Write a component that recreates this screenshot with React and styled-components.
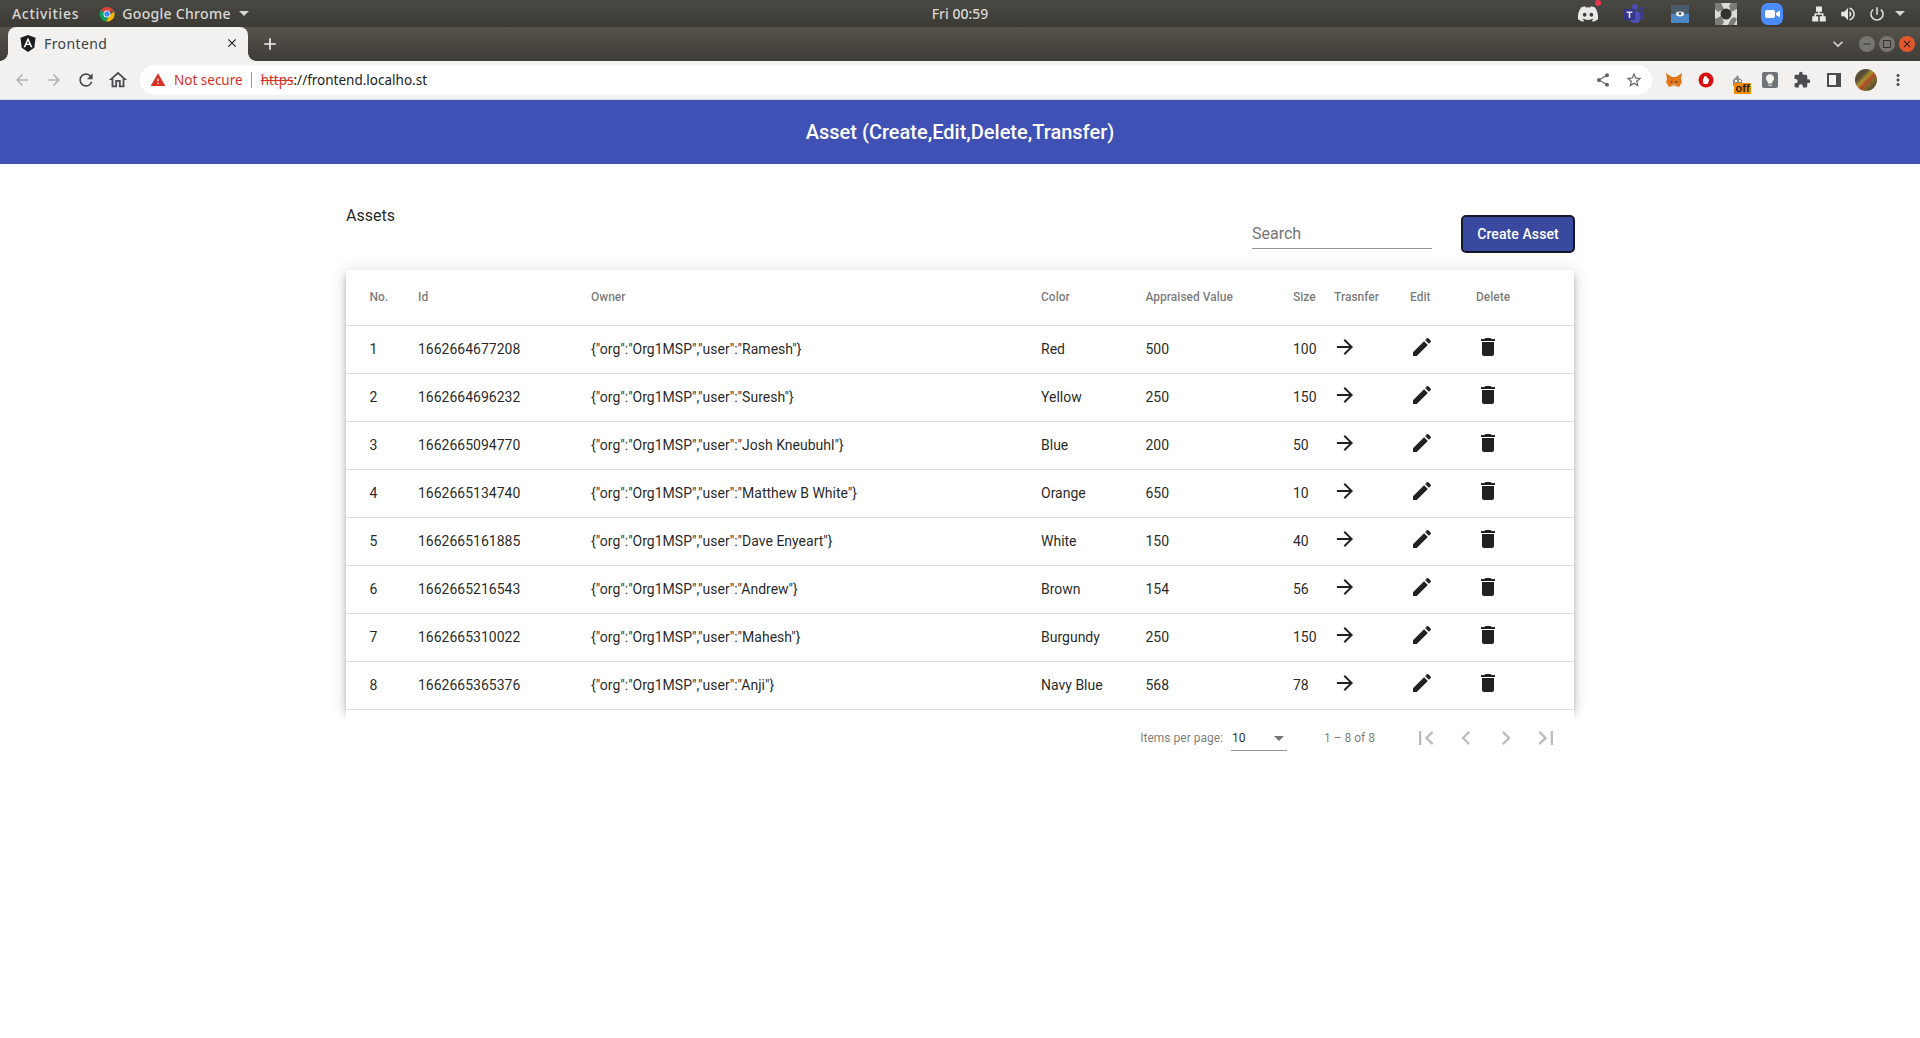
import React from "react";
import styled, { createGlobalStyle } from "styled-components";
import { MdArrowForward, MdEdit, MdDelete, MdFirstPage, MdChevronLeft, MdChevronRight, MdLastPage, MdArrowBack, MdRefresh, MdClose, MdAdd, MdStarBorder, MdMoreVert, MdExtension, MdKeyboardArrowDown, MdOutlineHome, MdWarning, MdShare, MdCropSquare, MdRemove, MdLightbulb, MdVolumeUp, MdPowerSettingsNew, MdLan } from "react-icons/md";
import { FaDiscord } from "react-icons/fa";

const Global = createGlobalStyle`
  html, body { margin: 0; padding: 0; background: #fff; }
  body { font-family: Roboto, "Liberation Sans", sans-serif; height: 1038px; overflow: hidden; }
`;
const SystemBar = styled.div`
  height: 27px; background: linear-gradient(#4a4842, #3c3a35); display: grid; grid-template-columns: 1fr auto 1fr; align-items: center;
  color: #d9d8d4; font: 500 14px "Noto Sans", sans-serif; padding: 0 12px; box-sizing: border-box;
`;
const SysLeft = styled.div`display: flex; align-items: center; gap: 20px; letter-spacing: .3px;`;
const Activities = styled.span`letter-spacing: .7px;`;
const SysApp = styled.div`display: flex; align-items: center; gap: 7px;`;
const Caret = styled.span`width: 0; height: 0; border-left: 5px solid transparent; border-right: 5px solid transparent; border-top: 5px solid #d9d8d4; margin-left: 1px;`;
const SysClock = styled.div`font-size: 14px;`;
const SysRight = styled.div`display: flex; align-items: center; justify-content: flex-end; color: #e8e8e6;`;
const SysSlot = styled.span`display: flex; align-items: center; justify-content: center; width: ${p => p.$w}px; margin-left: ${p => p.$ml || 0}px; position: relative;`;
const RedDot = styled.span`position: absolute; top: -3px; right: 10px; width: 6px; height: 6px; border-radius: 50%; background: #e8384f;`;
const TabStrip = styled.div`height: 34px; background: linear-gradient(#55524b, #3f3d38); display: flex; align-items: flex-end; padding-left: 8px; color: #f1f1f1;`;
const Tab = styled.div`
  position: relative;
  width: 240px; height: 34px; background: #f2f1f0; border-radius: 8px 8px 0 0; display: flex; align-items: center; box-sizing: border-box; padding: 0 9px 2px 12px;
  color: #3c4043; font: 14px "Noto Sans", sans-serif; gap: 8px; letter-spacing: .4px; margin-right: 12px;
  &::before, &::after { content: ""; position: absolute; bottom: 0; width: 8px; height: 8px; }
  &::before { right: 100%; background: radial-gradient(circle at 0 0, transparent 7.5px, #f2f1f0 8px); }
  &::after { left: 100%; background: radial-gradient(circle at 100% 0, transparent 7.5px, #f2f1f0 8px); }
`;
const TabTitle = styled.span`flex: 1;`;
const NewTab = styled.div`height: 34px; display: flex; align-items: center; color: #f1f1f1;`;
const WinControls = styled.div`margin-left: auto; height: 34px; display: flex; align-items: center; gap: 4px; padding-right: 5px;`;
const TabsMenu = styled.span`display: flex; color: #d8d7d3; margin-right: 7px;`;
const WinBtn = styled.span`width: 16px; height: 16px; border-radius: 50%; background: ${p => p.$close ? "#e2582c" : "#77756f"}; display: flex; align-items: center; justify-content: center; color: ${p => p.$close ? "#30211c" : "#35332f"};`;
const Toolbar = styled.div`height: 39px; background: #f2f1f0; display: flex; align-items: center; box-sizing: border-box; border-bottom: 1px solid #d8d7d5; color: #5f6368;`;
const NavBtn = styled.span`width: 32px; display: flex; align-items: center; justify-content: center; color: ${p => p.$off ? "#b0b0b0" : "#4a4c4f"}; flex: none;`;
const NavGroup = styled.div`display: flex; align-items: center; padding-left: 6px; margin-right: 6px;`;
const Omnibox = styled.div`
  flex: 1; height: 30px; background: #fff; border-radius: 15px; display: flex; align-items: center; padding: 0 9px 0 10px; font: 13.5px "Noto Sans", sans-serif; color: #202124; margin-right: 6px;
`;
const NotSecure = styled.span`color: #d93025; margin-left: 8px;`;
const Sep = styled.span`width: 1px; height: 16px; background: #9a9a9a; margin: 0 9px 0 8px;`;
const Strike = styled.span`color: #d93025; text-decoration: line-through;`;
const OmniIcons = styled.div`margin-left: auto; display: flex; gap: 14px; align-items: center; color: #5f6368;`;
const Exts = styled.div`display: flex; align-items: center; padding-right: 6px;`;
const Ext = styled.span`width: 32px; display: flex; align-items: center; justify-content: center; position: relative; color: #4a4c4f;`;
const OffBadge = styled.span`position: absolute; left: 12px; top: 9px; background: #f08c00; color: #222; font: 700 11px/11px "Liberation Sans", sans-serif; padding: 0 1.5px; border-radius: 1px;`;
const Avatar = styled.span`width: 22px; height: 22px; border-radius: 50%; background: linear-gradient(135deg, #5a4a38 0 30%, #a8952e 45%, #b8452a 55%, #7a6a2a 68%, #3c2f28 100%);`;
const BulbCard = styled.span`display: flex; width: 16px; height: 16px; background: #6f7377; border-radius: 2px; align-items: center; justify-content: center; color: #f2f1f0;`;
const Header = styled.header`height: 64px; background: #3f51b5; color: #fff; display: flex; align-items: center; justify-content: center; font: 500 20px Roboto, sans-serif;`;
const Main = styled.main`width: 1228px; margin: 0 auto;`;
const TopRow = styled.div`height: 106px; display: flex; box-sizing: border-box; padding-top: 40px;`;
const PageTitle = styled.h2`margin: 0; font: 400 16px/24px Roboto, sans-serif; color: rgba(0,0,0,.87); flex: 1;`;
const Search = styled.div`width: 180px; height: 30px; margin-top: 14px; border-bottom: 1px solid #949494; color: #757575; font: 16px/31px Roboto, sans-serif;`;
const CreateBtn = styled.button`
  width: 114px; height: 38px; margin: 11px -1px 0 29px; background: #3949a0; border: 2px solid #15182a; border-radius: 5px; color: #fff; font: 500 14px Roboto, sans-serif; letter-spacing: .1px; padding: 0;
`;
const Card = styled.div`background: #fff; box-shadow: 0 3px 5px -1px rgba(0,0,0,.2), 0 6px 10px 0 rgba(0,0,0,.14), 0 1px 18px 0 rgba(0,0,0,.12);`;
const Row = styled.div`
  display: grid; padding: 0 0 2px 23.5px; box-sizing: border-box; align-items: center; border-bottom: 1px solid #e0e0e0;
  height: ${p => p.$head ? 56 : 48}px;
  font: ${p => p.$head ? "500 12px" : "400 14px"} Roboto, sans-serif;
  color: ${p => p.$head ? "rgba(0,0,0,.54)" : "rgba(0,0,0,.87)"};
  grid-template-columns: 48.5px 173px 450px 104.5px 147.5px 41px 76px 66px 98px;
`;
const IconCell = styled.span`display: flex; color: rgba(0,0,0,.87); margin-left: ${p => p.$x || 0}px; margin-top: -3px;`;
const Paginator = styled.div`
  position: relative; height: 56px; background: #fff; display: flex; align-items: center; justify-content: flex-end; padding-right: 8px; font: 12px Roboto, sans-serif; color: rgba(0,0,0,.54);
`;
const Select = styled.div`width: 56px; height: 25px; margin-left: 8px; border-bottom: 1px solid #949494; display: flex; align-items: center; justify-content: space-between; color: rgba(0,0,0,.87); padding: 1px 2px 0 1px; box-sizing: border-box;`;
const SelectCaret = styled.span`width: 0; height: 0; border-left: 5px solid transparent; border-right: 5px solid transparent; border-top: 5px solid #757575; margin-right: 1px;`;
const Range = styled.div`margin: 0 31px 0 37px;`;
const PageBtn = styled.span`width: 40px; height: 40px; display: flex; align-items: center; justify-content: center; color: rgba(0,0,0,.26);`;

const assets = [
  ["1662664677208", "Ramesh", "Red", 500, 100],
  ["1662664696232", "Suresh", "Yellow", 250, 150],
  ["1662665094770", "Josh Kneubuhl", "Blue", 200, 50],
  ["1662665134740", "Matthew B White", "Orange", 650, 10],
  ["1662665161885", "Dave Enyeart", "White", 150, 40],
  ["1662665216543", "Andrew", "Brown", 154, 56],
  ["1662665310022", "Mahesh", "Burgundy", 250, 150],
  ["1662665365376", "Anji", "Navy Blue", 568, 78],
];

const ChromeLogo = () => (
  <svg width="16" height="16" viewBox="0 0 16 16">
    <path d="M8 8 1.600 4.800A7.500 7.500 0 0 1 15 5.300H8z" fill="#db4437" />
    <path d="M1.600 4.200A7.500 7.500 0 0 0 7 15.500l3-6z" fill="#0f9d58" />
    <path d="M15 5.300A7.500 7.500 0 0 1 7 15.500l3.500-6z" fill="#f4b400" />
    <circle cx="8" cy="8" r="3.500" fill="#fff" />
    <circle cx="8" cy="8" r="2.700" fill="#4285f4" />
  </svg>
);
const AngularLogo = () => (
  <svg width="16" height="17" viewBox="0 0 16 17">
    <path d="M8 0 .5 2.700l1.200 10L8 17l6.300-4.300 1.200-10z" fill="#1c1c1e" />
    <path d="M8 2.500 3.600 12.300h1.700l.9-2.200h3.600l.9 2.200h1.700zM6.900 8.700 8 6l1.100 2.700z" fill="#fff" />
  </svg>
);
const Teams = () => (
  <svg width="22" height="22" viewBox="0 0 22 22">
    <circle cx="18" cy="6" r="2.200" fill="#3c3f8e" />
    <circle cx="12" cy="4" r="3" fill="#4a4fb0" />
    <rect x="15" y="9" width="6" height="8" rx="3" fill="#3c3f8e" />
    <rect x="7" y="8" width="10" height="12" rx="4" fill="#4a4fb0" />
    <rect x="1" y="6" width="11" height="11" rx="1" fill="#34358c" />
    <path d="M3.500 8.500h6v1.400H7.300v5H5.700v-5H3.500z" fill="#dfe0f2" />
  </svg>
);
const Fox = () => (
  <svg width="16" height="15" viewBox="0 0 16 15">
    <path d="M0 0l6 4h4l6-4-1 6 1 3-3 5-3-1H6l-3 1-3-5 1-3z" fill="#e2761b" />
    <path d="M5 8l2 1-2 1zM11 8l-2 1 2 1z" fill="#233447" />
    <path d="M6 11.500h4l-1 2H7z" fill="#d7c1b3" />
  </svg>
);
const Opera = () => (
  <svg width="16" height="16" viewBox="0 0 16 16">
    <circle cx="8" cy="8" r="7.500" fill="#d8100f" />
    <path d="M5 11V6.500h1V4.500h1V4h1v.5h1V6h1v1.500l1-1v2.500L9.500 12H6.500z" fill="#fff" />
  </svg>
);
const Ghost = () => (
  <svg width="12" height="13" viewBox="0 0 12 13"><path d="M1 12V6l2-2 3-3 1 3 3 2v6z" fill="#8d8d8d" /><path d="M3 6h2v2H3zM7 6h2v2H7z" fill="#fff" /></svg>
);
const Wallabag = () => (
  <svg width="18" height="18" viewBox="0 0 18 18">
    <rect x="0" y="0" width="18" height="18" rx="1" fill="#4b87c4" />
    <rect x="0" y="0" width="18" height="9" fill="#4a5a68" />
    <ellipse cx="9" cy="9" rx="4" ry="2.400" fill="#fff" />
    <circle cx="9" cy="8.600" r="1.400" fill="#39485a" />
  </svg>
);
const Aperture = () => (
  <svg width="22" height="22" viewBox="0 0 22 22">
    <rect width="22" height="22" fill="#dcdcd8" />
    <path d="M6 0 9 6 3 9 0 6V0zM22 6l-6 3-2-6 2-3h6zM22 16l-3 6h-6l3-6 3-2zM0 16l6-3 3 6-2 3H0z" fill="#7c7b76" />
    <circle cx="11" cy="11" r="5.500" fill="#33322e" />
  </svg>
);
const Zoom = () => (
  <svg width="22" height="22" viewBox="0 0 22 22">
    <rect width="22" height="22" rx="7" fill="#4a8cff" />
    <rect x="4" y="7" width="10" height="8" rx="2" fill="#fff" />
    <path d="m15 10 4-2.500v7L15 12z" fill="#fff" />
  </svg>
);
const PanelIcon = () => (
  <svg width="14" height="14" viewBox="0 0 14 14"><path fillRule="evenodd" d="M0 0h14v14H0zM2 2v10h7V2z" fill="#4a4c4f" /></svg>
);

export default function App() {
  return (
    <>
      <Global />
      <SystemBar>
        <SysLeft>
          <Activities>Activities</Activities>
          <SysApp><ChromeLogo /><span>Google Chrome</span><Caret /></SysApp>
        </SysLeft>
        <SysClock>Fri 00:59</SysClock>
        <SysRight>
          <SysSlot $w={46}><FaDiscord size={22} /><RedDot /></SysSlot>
          <SysSlot $w={46}><Teams /></SysSlot>
          <SysSlot $w={46}><Wallabag /></SysSlot>
          <SysSlot $w={46}><Aperture /></SysSlot>
          <SysSlot $w={46}><Zoom /></SysSlot>
          <SysSlot $w={29} $ml={9}><MdLan size={18} /></SysSlot>
          <SysSlot $w={29}><MdVolumeUp size={18} /></SysSlot>
          <SysSlot $w={29}><MdPowerSettingsNew size={18} /></SysSlot>
          <SysSlot $w={17}><Caret /></SysSlot>
        </SysRight>
      </SystemBar>
      <TabStrip>
        <Tab>
          <AngularLogo />
          <TabTitle>Frontend</TabTitle>
          <MdClose size={14} color="#222" />
        </Tab>
        <NewTab><MdAdd size={20} /></NewTab>
        <WinControls>
          <TabsMenu><MdKeyboardArrowDown size={20} /></TabsMenu>
          <WinBtn><MdRemove size={12} /></WinBtn>
          <WinBtn><MdCropSquare size={12} /></WinBtn>
          <WinBtn $close><MdClose size={12} /></WinBtn>
        </WinControls>
      </TabStrip>
      <Toolbar>
        <NavGroup>
          <NavBtn $off><MdArrowBack size={18} /></NavBtn>
          <NavBtn $off><MdArrowForward size={18} /></NavBtn>
          <NavBtn><MdRefresh size={20} /></NavBtn>
          <NavBtn><MdOutlineHome size={22} /></NavBtn>
        </NavGroup>
        <Omnibox>
          <MdWarning size={16} color="#d93025" />
          <NotSecure>Not secure</NotSecure>
          <Sep />
          <span><Strike>https</Strike>://frontend.localho.st</span>
          <OmniIcons>
            <MdShare size={16} />
            <MdStarBorder size={18} />
          </OmniIcons>
        </Omnibox>
        <Exts>
          <Ext><Fox /></Ext>
          <Ext><Opera /></Ext>
          <Ext><Ghost /><OffBadge>off</OffBadge></Ext>
          <Ext><BulbCard><MdLightbulb size={14} /></BulbCard></Ext>
          <Ext><MdExtension size={18} /></Ext>
          <Ext><PanelIcon /></Ext>
          <Ext><Avatar /></Ext>
          <Ext><MdMoreVert size={18} /></Ext>
        </Exts>
      </Toolbar>
      <Header>Asset (Create,Edit,Delete,Transfer)</Header>
      <Main>
        <TopRow>
          <PageTitle>Assets</PageTitle>
          <Search>Search</Search>
          <CreateBtn>Create Asset</CreateBtn>
        </TopRow>
        <Card>
          <Row $head>
            <span>No.</span><span>Id</span><span>Owner</span><span>Color</span><span>Appraised Value</span><span>Size</span><span>Trasnfer</span><span>Edit</span><span>Delete</span>
          </Row>
          {assets.map((a, i) => (
            <Row key={a[0]}>
              <span>{i + 1}</span>
              <span>{a[0]}</span>
              <span>{`{"org":"Org1MSP","user":"${a[1]}"}`}</span>
              <span>{a[2]}</span>
              <span>{a[3]}</span>
              <span>{a[4]}</span>
              <IconCell $x={-1}><MdArrowForward size={24} /></IconCell>
              <IconCell $x={0}><MdEdit size={24} /></IconCell>
              <IconCell $x={0}><MdDelete size={24} /></IconCell>
            </Row>
          ))}
        </Card>
        <Paginator>
          <span>Items per page:</span>
          <Select><span>10</span><SelectCaret /></Select>
          <Range>1 – 8 of 8</Range>
          <PageBtn><MdFirstPage size={28} /></PageBtn>
          <PageBtn><MdChevronLeft size={28} /></PageBtn>
          <PageBtn><MdChevronRight size={28} /></PageBtn>
          <PageBtn><MdLastPage size={28} /></PageBtn>
        </Paginator>
      </Main>
    </>
  );
}
